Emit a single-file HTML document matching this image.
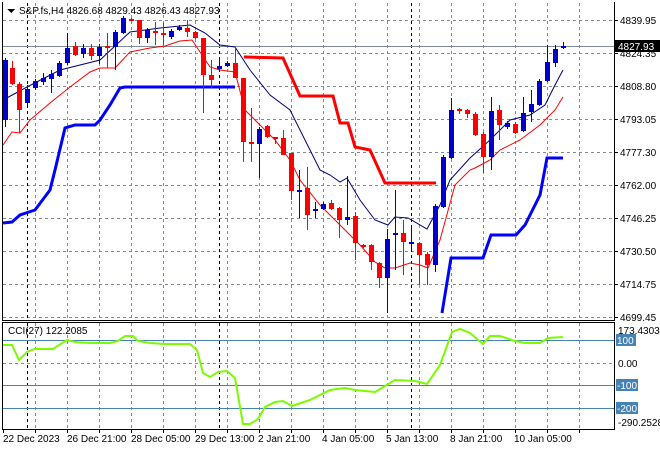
<!DOCTYPE html>
<html><head><meta charset="utf-8"><style>
html,body{margin:0;padding:0;background:#fff;width:660px;height:450px;overflow:hidden}
svg{display:block}
text{font-family:"Liberation Sans",sans-serif;font-size:10px;fill:#000}
</style></head><body>
<svg width="660" height="450" viewBox="0 0 660 450" xmlns="http://www.w3.org/2000/svg" shape-rendering="crispEdges">
<rect width="660" height="450" fill="#fff"/>
<!-- grid main -->
<g stroke="#7f8c99" stroke-dasharray="3,3" stroke-width="1">
<path d="M3 20.5H614M3 53.5H614M3 86.5H614M3 119.5H614M3 152.5H614M3 185.5H614M3 218.5H614M3 251.5H614M3 284.5H614M3 317.5H614"/>
<path d="M35.5 3V320M67.5 3V320M99.5 3V320M131.5 3V320M163.5 3V320M195.5 3V320M227.5 3V320M259.5 3V320M291.5 3V320M323.5 3V320M355.5 3V320M387.5 3V320M419.5 3V320M451.5 3V320M483.5 3V320M515.5 3V320M547.5 3V320M579.5 3V320"/>
<path d="M3 363.5H614"/>
<path d="M35.5 323V428M67.5 323V428M99.5 323V428M131.5 323V428M163.5 323V428M195.5 323V428M227.5 323V428M259.5 323V428M291.5 323V428M323.5 323V428M355.5 323V428M387.5 323V428M419.5 323V428M451.5 323V428M483.5 323V428M515.5 323V428M547.5 323V428M579.5 323V428"/>
</g>
<g stroke="#000" stroke-dasharray="3,3">
<path d="M27.5 3V320M219.5 3V320M411.5 3V320M27.5 323V428M219.5 323V428M411.5 323V428"/>
</g>
<path d="M3 46.5H614" stroke="#7f8c99"/>
<g stroke="#4682b4"><path d="M3 340.5H614M3 385.5H614M3 408.5H614"/></g>
<!-- thick lines -->
<g fill="none" stroke-width="3" shape-rendering="auto">
<polyline stroke="#ff0000" points="244,57 283,58 300,96 333,96 340,123 348,123 355,147 370,150 385,183 436,183"/>
<polyline stroke="#0000ff" points="3,223 12,222 20,215 35,210 50,190 55,170 65,128 75,125 95,125 100,120 110,105 120,88 125,87 235,87"/>
<polyline stroke="#0000ff" points="442,313 451,258 483,258 491,235 516,235 525,225 540,195 547,158 563,158"/>
</g>
<g fill="none" stroke-width="1" shape-rendering="auto">
<polyline stroke="#000080" points="3,100 27,87 60,70 100,60 130,32 160,28 190,25 205,33 220,45 235,47 250,70 270,95 290,110 300,130 320,170 330,175 340,182 347,178 360,200 375,220 388,225 395,217 408,218 427,229 440,205 450,180 470,158 490,140 510,120 530,115 545,105 555,85 563,70"/>
<polyline stroke="#ff0000" points="3,145 12,132 20,133 30,120 50,103 70,87 90,72 100,68 115,68 130,52 150,48 165,46 180,41 192,40 200,52 210,67 220,70 235,72 245,110 260,125 275,140 290,160 300,180 320,205 340,225 360,245 375,262 385,268 395,268 410,263 420,265 428,268 440,240 455,185 470,170 475,168 490,160 500,150 520,140 540,125 555,110 563,97"/>
</g>
<!-- candles -->
<g id="c"></g>
<g>
<!-- generated statically -->
<g stroke="#0000c8" fill="#0000c8">
<path d="M5.5 58V127M27.5 85V105M35.5 79V90M43.5 73V85M51.5 70V93M59.5 61V77M67.5 33V65M83.5 44V58M99.5 44V64M115.5 30V70M123.5 16V34M147.5 28V43M171.5 29V39M179.5 25V31M219.5 57V70M227.5 61V67M259.5 127V178M299.5 170V218M315.5 202V218M323.5 202V210M347.5 176V225M387.5 229V313M395.5 190V270M411.5 225V250M435.5 204V272M443.5 155V208M451.5 98V159M491.5 97V170M507.5 121V129M523.5 97V132M531.5 90V122M539.5 79V106M547.5 45V82M555.5 45V67M563.5 42V49"/>
</g>
<g fill="#0000c8">
<rect x="3" y="60" width="5" height="60"/><rect x="25" y="89" width="5" height="14"/><rect x="33" y="81" width="5" height="7"/><rect x="41" y="78" width="5" height="4"/><rect x="49" y="74" width="5" height="5"/><rect x="57" y="63" width="5" height="13"/><rect x="65" y="48" width="5" height="15"/><rect x="81" y="48" width="5" height="6"/><rect x="97" y="47" width="5" height="9"/><rect x="113" y="32" width="5" height="15"/><rect x="121" y="18" width="5" height="15"/><rect x="145" y="30" width="5" height="8"/><rect x="169" y="31" width="5" height="6"/><rect x="177" y="27" width="5" height="3"/><rect x="217" y="66" width="5" height="3"/><rect x="225" y="63" width="5" height="3"/><rect x="257" y="129" width="5" height="15"/><rect x="297" y="190" width="5" height="2"/><rect x="313" y="209" width="5" height="2"/><rect x="321" y="204" width="5" height="5"/><rect x="345" y="217" width="5" height="3"/><rect x="385" y="239" width="5" height="39"/><rect x="393" y="233" width="5" height="2"/><rect x="409" y="242" width="5" height="2"/><rect x="433" y="206" width="5" height="59"/><rect x="441" y="157" width="5" height="50"/><rect x="449" y="110" width="5" height="48"/><rect x="489" y="111" width="5" height="46"/><rect x="505" y="123" width="5" height="4"/><rect x="521" y="113" width="5" height="18"/><rect x="529" y="104" width="5" height="8"/><rect x="537" y="81" width="5" height="24"/><rect x="545" y="62" width="5" height="19"/><rect x="553" y="49" width="5" height="14"/><rect x="561" y="46" width="5" height="2"/>
</g>
<g stroke="#ff0000">
<path d="M12.5 61V85M19.5 82V133M75.5 42V56M91.5 44V60M107.5 33V68M131.5 18V21M139.5 20V44M155.5 22V45M163.5 23V45M187.5 20V37M195.5 31V39M203.5 38V113M211.5 60V88M235.5 47V78M243.5 78V162M251.5 108V162M267.5 125V138M275.5 137V144M283.5 130V155M291.5 153V200M307.5 167V230M331.5 200V210M339.5 207V238M355.5 212V260M363.5 244V248M371.5 244V270M379.5 262V288M403.5 220V275M419.5 242V285M427.5 252V285M459.5 108V114M467.5 109V118M475.5 112V136M483.5 132V173M499.5 105V140M515.5 122V134"/>
</g>
<g fill="#ff0000">
<rect x="10" y="68" width="5" height="16"/><rect x="17" y="84" width="5" height="26"/><rect x="73" y="46" width="5" height="9"/><rect x="89" y="48" width="5" height="8"/><rect x="105" y="46" width="5" height="2"/><rect x="129" y="19" width="5" height="2"/><rect x="137" y="20" width="5" height="18"/><rect x="153" y="31" width="5" height="2"/><rect x="161" y="33" width="5" height="2"/><rect x="185" y="28" width="5" height="4"/><rect x="193" y="32" width="5" height="6"/><rect x="201" y="38" width="5" height="37"/><rect x="209" y="75" width="5" height="5"/><rect x="233" y="63" width="5" height="15"/><rect x="241" y="78" width="5" height="64"/><rect x="249" y="142" width="5" height="2"/><rect x="265" y="126" width="5" height="11"/><rect x="273" y="137" width="5" height="2"/><rect x="281" y="138" width="5" height="17"/><rect x="289" y="153" width="5" height="38"/><rect x="305" y="188" width="5" height="27"/><rect x="329" y="203" width="5" height="6"/><rect x="337" y="208" width="5" height="12"/><rect x="353" y="216" width="5" height="27"/><rect x="361" y="245" width="5" height="2"/><rect x="369" y="245" width="5" height="17"/><rect x="377" y="263" width="5" height="15"/><rect x="401" y="233" width="5" height="9"/><rect x="417" y="243" width="5" height="12"/><rect x="425" y="254" width="5" height="11"/><rect x="457" y="109" width="5" height="2"/><rect x="465" y="110" width="5" height="4"/><rect x="473" y="114" width="5" height="21"/><rect x="481" y="134" width="5" height="23"/><rect x="497" y="110" width="5" height="15"/><rect x="513" y="124" width="5" height="9"/>
</g>
</g>
<!-- CCI -->
<polyline fill="none" stroke="#7cfc00" stroke-width="2" shape-rendering="auto" points="2,345 12,345 19,360 27,352 35,349 53,349 67,340 75,342 90,343 110,343 118,341 125,336 133,336 138,341 150,343 165,344 190,344 197,350 203,373 210,377 218,372 227,371 235,378 243,424 250,424 258,419 265,407 275,402 283,401 292,406 310,400 330,390 345,388 355,390 375,392 385,386 395,380 415,381 427,384 440,365 452,332 460,329 470,333 483,344 490,336 500,336 515,341 525,343 540,343 548,338 563,337"/>
<!-- borders -->
<g stroke="#000" fill="none">
<path d="M2.5 2V320.5H614.5V2"/>
<path d="M2.5 322.5H614.5V429.5H2.5Z"/>
</g>
<!-- price axis ticks -->
<g stroke="#000"><path d="M614 20.5h4M614 53.5h4M614 86.5h4M614 119.5h4M614 152.5h4M614 185.5h4M614 218.5h4M614 251.5h4M614 284.5h4M614 317.5h4"/>
<path d="M3.5 429v4M35.5 429v4M67.5 429v4M99.5 429v4M131.5 429v4M163.5 429v4M195.5 429v4M227.5 429v4M259.5 429v4M291.5 429v4M323.5 429v4M355.5 429v4M387.5 429v4M419.5 429v4M451.5 429v4M483.5 429v4M515.5 429v4M547.5 429v4M579.5 429v4"/></g>
<g>
<text x="620" y="24">4839.95</text>
<text x="620" y="57">4824.35</text>
<text x="620" y="90">4808.80</text>
<text x="620" y="123">4793.05</text>
<text x="620" y="156">4777.30</text>
<text x="620" y="189">4762.00</text>
<text x="620" y="222">4746.25</text>
<text x="620" y="255">4730.50</text>
<text x="620" y="288">4714.75</text>
<text x="620" y="321">4699.45</text>
</g>
<rect x="615" y="40" width="45" height="12" fill="#000"/>
<text x="618" y="50" style="fill:#fff">4827.93</text>
<text x="618" y="334">173.4303</text>
<rect x="616" y="334" width="20" height="12" fill="#4682b4"/><text x="617" y="344" style="fill:#fff">100</text>
<text x="618" y="367">0.00</text>
<rect x="616" y="379" width="22" height="12" fill="#4682b4"/><text x="617" y="389" style="fill:#fff">-100</text>
<rect x="616" y="402" width="22" height="12" fill="#4682b4"/><text x="617" y="412" style="fill:#fff">-200</text>
<text x="618" y="426">-290.2528</text>
<text x="8" y="334">CCI(27) 122.2085</text>
<path d="M7 9h8l-4 4z" fill="#000"/>
<text x="19" y="14">S&amp;P.fs,H4  4826.68 4829.43 4826.43 4827.93</text>
<g>
<text x="3" y="442">22 Dec 2023</text>
<text x="67" y="442">26 Dec 21:00</text>
<text x="131" y="442">28 Dec 05:00</text>
<text x="195" y="442">29 Dec 13:00</text>
<text x="258" y="442">2 Jan 21:00</text>
<text x="322" y="442">4 Jan 05:00</text>
<text x="386" y="442">5 Jan 13:00</text>
<text x="450" y="442">8 Jan 21:00</text>
<text x="514" y="442">10 Jan 05:00</text>
</g>
</svg>
</body></html>
